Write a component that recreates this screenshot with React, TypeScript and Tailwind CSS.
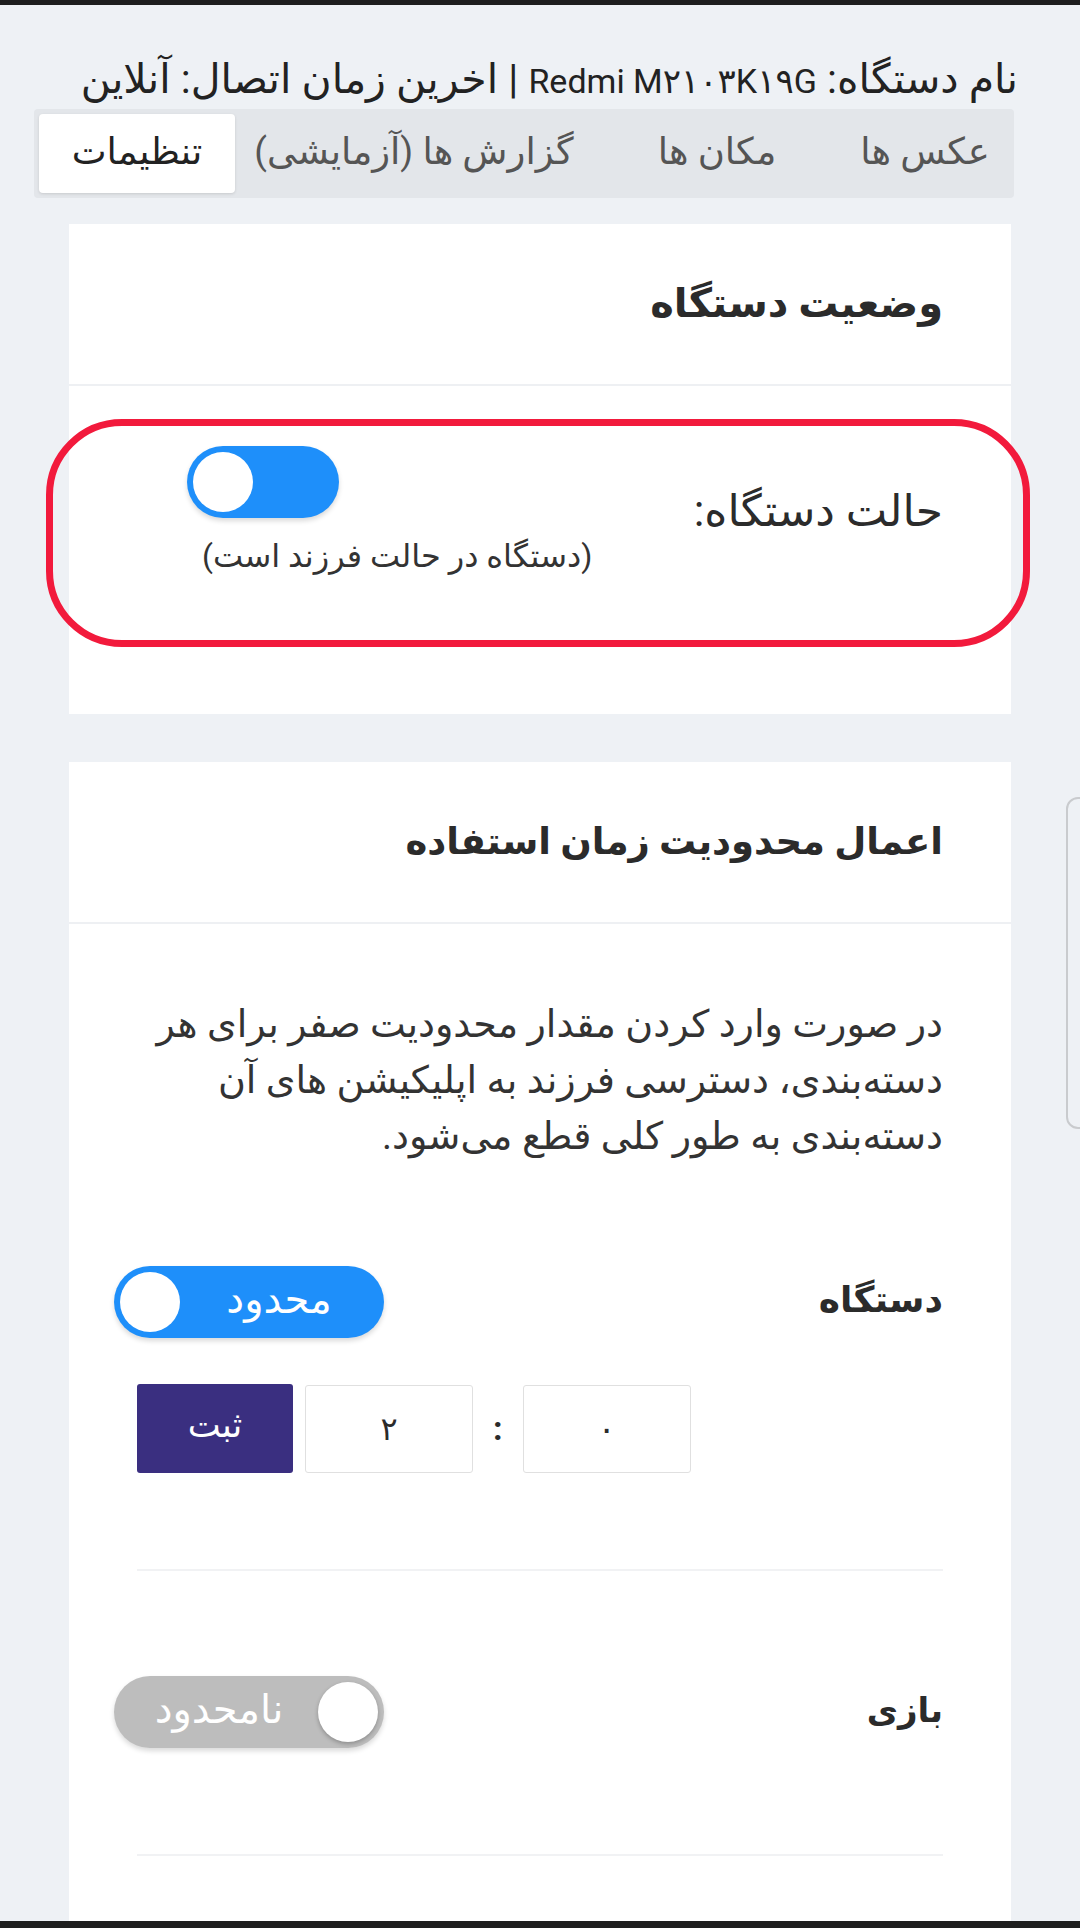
import type { ReactNode } from "react";

const tabs = [
  { label: "عکس ها", cls: "w-[168px]" },
  { label: "مکان ها", cls: "w-[248px]" },
  { label: "گزارش ها (آزمایشی)", cls: "flex-1" },
];

function Toggle({ on, label, wide = false }: { on: boolean; label?: string; wide?: boolean }) {
  return (
    <div
      dir="ltr"
      className={
        (wide ? "w-[270px] " : "w-[152px] ") +
        (on ? "bg-[#1e8ffa] justify-start " : "bg-[#bdbdbd] justify-end ") +
        "flex h-[72px] items-center rounded-full px-[6px] shadow-[0_3px_5px_rgba(0,0,0,0.15)]"
      }
    >
      {on ? (
        <>
          <div className="h-[60px] w-[60px] shrink-0 rounded-full bg-white" />
          {label ? <span className="flex-1 pb-[4px] text-center text-[40px] leading-none text-white">{label}</span> : null}
        </>
      ) : (
        <>
          {label ? <span className="flex-1 pb-[4px] text-center text-[40px] leading-none text-white">{label}</span> : null}
          <div className="h-[60px] w-[60px] shrink-0 rounded-full bg-white shadow-[0_2px_4px_rgba(0,0,0,0.25)]" />
        </>
      )}
    </div>
  );
}

function Card({ title, size, children, className = "" }: { title: string; size: string; children: ReactNode; className?: string }) {
  return (
    <section className={"mx-[69px] bg-white " + className}>
      <div className="flex h-[162px] items-center border-b-2 border-[#eef0f3] pr-[68px]">
        <h2 className={size + " font-bold text-[#2b2b2b]"}>{title}</h2>
      </div>
      {children}
    </section>
  );
}

export default function App() {
  return (
    <div
      dir="rtl"
      className="relative flex h-[1928px] flex-col overflow-hidden bg-[#eef1f5] text-[#2b2b2b]"
      style={{ fontFamily: "Roboto, 'DejaVu Sans', sans-serif" }}
    >
      <div className="h-[5px] shrink-0 bg-[#1e1e1e]" />

      <div className="h-[94px] whitespace-nowrap pr-[62px] pt-[50px] text-right text-[41px] leading-[48px] text-[#222]">
        <span>نام دستگاه: </span>
        <span className="text-[34px]">Redmi M۲۱۰۳K۱۹G</span>
        <span> | اخرین زمان اتصال: آنلاین</span>
      </div>

      <nav className="ml-[34px] mr-[66px] mt-[10px] flex h-[89px] items-center rounded-[4px] bg-[#e3e6ea] p-[5px] text-[37px] text-[#555]">
        {tabs.map((tab) => (
          <div key={tab.label} className={tab.cls + " flex h-full items-center justify-center pb-[4px]"}>
            {tab.label}
          </div>
        ))}
        <div className="flex h-full w-[196px] items-center justify-center rounded-[4px] bg-white pb-[4px] text-[#222] shadow-[0_1px_3px_rgba(0,0,0,0.12)]">
          تنظیمات
        </div>
      </nav>

      <Card title="وضعیت دستگاه" size="text-[40px]" className="relative mt-[26px]">
        <div className="flex h-[328px] items-start justify-between pr-[68px] pl-[118px] pt-[60px]">
          <div className="pt-[32px] text-[44px]">حالت دستگاه:</div>
          <div className="flex flex-col items-end gap-[14px]">
            <Toggle on />
            <div className="ml-[15px] text-[32px] text-[#333]">(دستگاه در حالت فرزند است)</div>
          </div>
        </div>
        <div className="pointer-events-none absolute left-[-23px] top-[195px] h-[228px] w-[984px] rounded-[76px] border-[7px] border-[#f21a3c]" />
      </Card>

      <Card title="اعمال محدودیت زمان استفاده" size="text-[37px]" className="mt-[48px] flex-1">
        <div className="px-[68px] pt-[72px]">
          <p className="text-[38px] leading-[56px] text-[#333]">
            در صورت وارد کردن مقدار محدودیت صفر برای هر
            <br />
            دسته‌بندی، دسترسی فرزند به اپلیکیشن های آن
            <br />
            دسته‌بندی به طور کلی قطع می‌شود.
          </p>

          <div className="ml-[-23px] mt-[102px] flex items-center justify-between">
            <div className="pb-[4px] text-[36px] font-bold">دستگاه</div>
            <Toggle on wide label="محدود" />
          </div>

          <div className="mt-[46px] flex items-center justify-end gap-[12px]">
            <div className="flex h-[88px] w-[168px] items-center justify-center rounded-[3px] border border-[#e0e0e0] text-[34px]">
              ۰
            </div>
            <div className="px-[8px] text-[34px] font-bold">:</div>
            <div className="flex h-[88px] w-[168px] items-center justify-center rounded-[3px] border border-[#e0e0e0] text-[32px]">
              ۲
            </div>
            <button className="h-[89px] w-[156px] rounded-[3px] bg-[#3a2f80] pb-[4px] text-[35px] text-white">ثبت</button>
          </div>

          <div className="mt-[96px] border-t-2 border-[#f1f2f4]" />

          <div className="ml-[-23px] mt-[105px] flex items-center justify-between">
            <div className="pb-[4px] text-[34px] font-bold">بازی</div>
            <Toggle on={false} wide label="نامحدود" />
          </div>

          <div className="mt-[106px] border-t-2 border-[#f1f2f4]" />
        </div>
      </Card>

      <div className="h-[7px] shrink-0 bg-[#1e1e1e]" />

      <div className="absolute left-[1066px] top-[797px] h-[332px] w-[40px] rounded-[12px] border-2 border-[#c9cbce]" />
    </div>
  );
}
